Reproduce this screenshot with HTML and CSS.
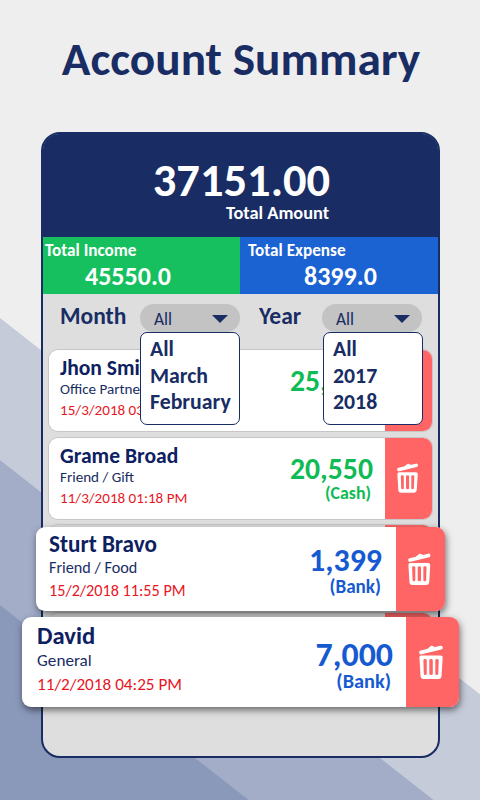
FILE: index.html
```html
<!DOCTYPE html>
<html lang="en">
<head>
    <meta charset="UTF-8">
    <meta name="viewport" content="width=device-width, initial-scale=1.0">
    <title>Account Summary</title>
    <link rel="stylesheet" href="styles.css">
</head>
<body>
    <svg width="0" height="0" class="sprite">
        <symbol id="trash" viewBox="0 0 22 31">
            <path d="M2 6.6 L20 2.2" stroke="#fff" stroke-width="3.6" stroke-linecap="round"/>
            <path d="M8.5 4 L11.5 1.6 L14 2.6" fill="none" stroke="#fff" stroke-width="2.2" stroke-linejoin="round"/>
            <path fill="#fff" fill-rule="evenodd" d="M2.4 9.4 H19.6 Q21.8 9.4 21.6 11.6 L20.6 28 Q20.3 30.8 17.8 30.8 H4.2 Q1.7 30.8 1.4 28 L0.4 11.6 Q0.2 9.4 2.4 9.4 Z M4 13.8 L4.4 26 Q4.5 27.2 5.8 27.2 Q7.2 27.2 7.1 26 V13.8 Q7.1 12.6 5.5 12.6 Q4 12.6 4 13.8 Z M9.4 13.8 V26 Q9.4 27.2 11 27.2 Q12.6 27.2 12.6 26 V13.8 Q12.6 12.6 11 12.6 Q9.4 12.6 9.4 13.8 Z M14.9 13.8 V26 Q14.8 27.2 16.2 27.2 Q17.5 27.2 17.6 26 L18 13.8 Q18 12.6 16.5 12.6 Q14.9 12.6 14.9 13.8 Z"/>
        </symbol>
    </svg>

    <h1>Account Summary</h1>

    <main class="phone">
        <header class="total">
            <div class="total-box">
                <div class="total-value">37151.00</div>
                <div class="total-label">Total Amount</div>
            </div>
        </header>

        <section class="stats">
            <div class="stat income">
                <div class="stat-label">Total Income</div>
                <div class="stat-value">45550.0</div>
            </div>
            <div class="stat expense">
                <div class="stat-label">Total Expense</div>
                <div class="stat-value">8399.0</div>
            </div>
        </section>

        <section class="filters">
            <span class="filter-label">Month</span>
            <div class="select">
                <span>All</span>
                <i class="arrow"></i>
                <ul class="menu">
                    <li>All</li>
                    <li>March</li>
                    <li>February</li>
                </ul>
            </div>
            <span class="filter-label year">Year</span>
            <div class="select">
                <span>All</span>
                <i class="arrow"></i>
                <ul class="menu menu-year">
                    <li>All</li>
                    <li>2017</li>
                    <li>2018</li>
                </ul>
            </div>
        </section>

        <section class="list">
            <div class="slot">
                <article class="card">
                    <div class="info">
                        <h2>Jhon Smith</h2>
                        <p>Office Partner</p>
                        <time>15/3/2018 03</time>
                    </div>
                    <div class="amount green">
                        <b>25,000</b>
                    </div>
                    <div class="delete"></div>
                </article>
            </div>
            <div class="slot">
                <article class="card">
                    <div class="info">
                        <h2>Grame Broad</h2>
                        <p>Friend / Gift</p>
                        <time>11/3/2018 01:18 PM</time>
                    </div>
                    <div class="amount green">
                        <b>20,550</b>
                        <small>(Cash)</small>
                    </div>
                    <div class="delete"><svg><use href="#trash"/></svg></div>
                </article>
            </div>
            <div class="slot">
                <article class="card pop pop-1">
                    <div class="info">
                        <h2>Sturt Bravo</h2>
                        <p>Friend / Food</p>
                        <time>15/2/2018 11:55 PM</time>
                    </div>
                    <div class="amount blue">
                        <b>1,399</b>
                        <small>(Bank)</small>
                    </div>
                    <div class="delete"><svg><use href="#trash"/></svg></div>
                </article>
            </div>
            <div class="slot">
                <article class="card pop pop-2">
                    <div class="info">
                        <h2>David</h2>
                        <p>General</p>
                        <time>11/2/2018 04:25 PM</time>
                    </div>
                    <div class="amount blue">
                        <b>7,000</b>
                        <small>(Bank)</small>
                    </div>
                    <div class="delete"><svg><use href="#trash"/></svg></div>
                </article>
            </div>
        </section>
    </main>
</body>
</html>
```

FILE: styles.css
```css
* {
    margin: 0;
    padding: 0;
    box-sizing: border-box;
}

body {
    width: 480px;
    height: 800px;
    overflow: hidden;
    font-family: Carlito, Lato, 'Open Sans', sans-serif;
    color: #192d64;
    /* three diagonal bands running down to the right */
    background: linear-gradient(218.1deg, #eee 0 546px, #c5cbd9 546.8px 657.8px, #a3adc8 658.6px 771.9px, #8a98ba 772.7px);
}

.sprite {
    position: absolute;
}

h1 {
    height: 132px;
    padding: 34px 0 0 2px;
    text-align: center;
    font-size: 47.3px;
    line-height: 50px;
    font-weight: 700;
    white-space: nowrap;
}

.phone {
    width: 399px;
    height: 626px;
    margin-left: 41px;
    border: 2px solid #192d64;
    border-radius: 19px;
    background: #dedede;
}

.total {
    height: 103px;
    display: flex;
    justify-content: center;
    background: #192d64;
    border-radius: 16px 16px 0 0;
    color: #fff;
}

.total-box {
    padding: 21px 0 0 2px;
    text-align: right;
    font-weight: 700;
}

.total-value {
    font-size: 46.5px;
    line-height: 50px;
}

.total-label {
    font-size: 18.4px;
    line-height: 20px;
    margin: -2px 1px 0 0;
}

.stats {
    display: grid;
    grid-template-columns: 197px 1fr;
    height: 57px;
    color: #fff;
    font-weight: 700;
}

.income {
    background: #16c05e;
    padding-left: 2px;
}

.expense {
    background: #1b62d2;
    padding-left: 8px;
}

.stat-label {
    font-size: 17.2px;
    line-height: 20px;
    padding-top: 4px;
}

.stat-value {
    font-size: 26px;
    line-height: 30px;
    padding-left: 40px;
}

.expense .stat-value {
    padding-left: 56px;
}

.filters {
    display: flex;
    height: 56px;
    padding: 10px 0 0 17px;
}

.filter-label {
    width: 80px;
    font-size: 23.5px;
    line-height: 25px;
    font-weight: 700;
}

.filter-label.year {
    width: 63px;
    margin-left: 19px;
}

.select {
    position: relative;
    display: flex;
    align-items: center;
    justify-content: space-between;
    width: 100px;
    height: 28px;
    padding: 1px 12px 0 14px;
    border-radius: 14px;
    background: #c3c3c3;
    font-size: 17.4px;
}

.arrow {
    border: 8px solid transparent;
    border-top: 8px solid #192d64;
    border-bottom: 0;
}

.menu {
    position: absolute;
    z-index: 3;
    top: 28px;
    left: 0;
    width: 100px;
    height: 93px;
    padding: 3px 0 0 9px;
    list-style: none;
    background: #fff;
    border: 1px solid #192d64;
    border-radius: 7px;
    font-size: 21.8px;
    font-weight: 700;
    line-height: 26.7px;
}

.menu-year {
    left: 1px;
}

.list {
    padding: 0 6.5px 0 6px;
}

.slot {
    position: relative;
    height: 81px;
    margin-bottom: 6.7px;
    border-radius: 9px;
    background: linear-gradient(90deg, #dedede 336px, #ff6565 336px);
    box-shadow: 0 0 0 1px #c6c6c6;
}

.card {
    display: flex;
    height: 100%;
    overflow: hidden;
    border-radius: 9px;
    background: #fff;
    font-size: 15.1px;
    line-height: 1.4em;
    white-space: nowrap;
}

.info {
    flex: 1;
    padding: 7px 0 0 11px;
}

h2 {
    font-size: 1.43em;
    line-height: inherit;
    color: #0d205f;
}

.info p,
.info time {
    display: block;
}

.info p {
    padding-top: 1px;
}

.info time {
    color: #e8161f;
}

.amount {
    padding: 17px 12px 0 0;
    text-align: right;
    font-weight: 700;
}

.amount b {
    display: block;
    font-size: 1.97em;
    line-height: 1em;
}

.amount small {
    display: block;
    font-size: 1.18em;
    line-height: 1.12em;
    padding-right: 2px;
}

.green {
    color: #10bb55;
}

.blue {
    color: #155ad0;
}

.delete {
    display: flex;
    align-items: center;
    justify-content: center;
    width: 46.5px;
    background: #ff6565;
}

.delete svg {
    width: 1.4em;
    height: 2em;
    margin-right: 2px;
}

/* cards lifted out of the phone frame */
.pop {
    position: absolute;
    box-shadow: 1px 3px 7px rgba(0, 0, 0, 0.55);
}

.pop-1 {
    z-index: 1;
    top: 2px;
    left: -13px;
    width: 409px;
    height: 84px;
    font-size: 16.2px;
}

.pop-1 .info {
    padding: 6px 0 0 13px;
}

.pop-1 .delete {
    width: 49px;
}

.pop-1 .amount {
    padding: 18px 14px 0 0;
}

.pop-1 small {
    margin-top: -1px;
    padding-right: 1px;
}

.pop-2 {
    z-index: 2;
    top: 4px;
    left: -27px;
    width: 437px;
    height: 90px;
    font-size: 17.2px;
}

.pop-2 .info {
    padding: 7px 0 0 15px;
}

.pop-2 .delete {
    width: 53px;
}

.pop-2 .amount {
    padding: 21px 13px 0 0;
}

.pop-2 small {
    margin-top: -2px;
}
```
